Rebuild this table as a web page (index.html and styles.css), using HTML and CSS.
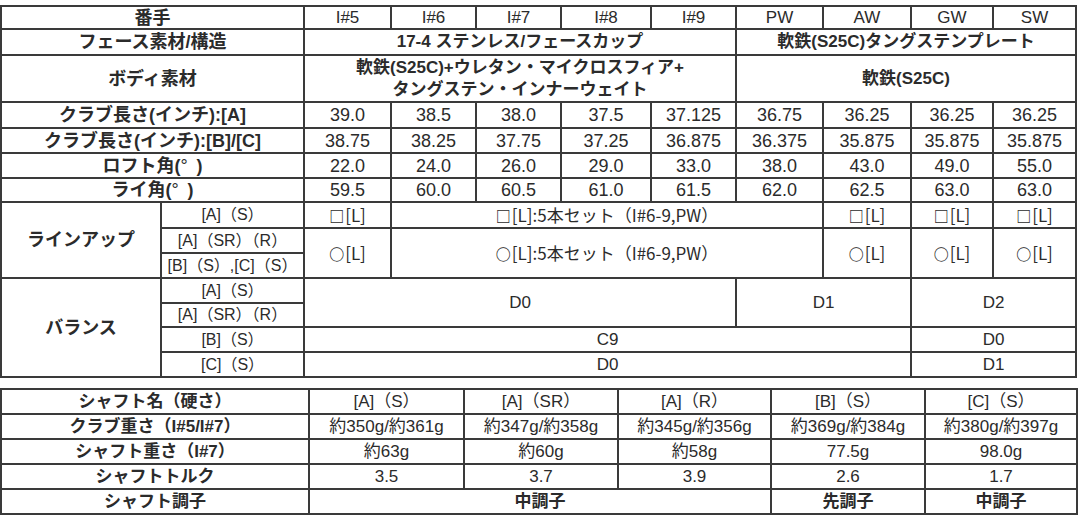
FILE: index.html
```html
<!DOCTYPE html>
<html lang="ja">
<head>
<meta charset="utf-8">
<title>スペック表</title>
<link rel="stylesheet" href="styles.css">
</head>
<body>
<div class="page">
<table class="spec">
  <colgroup>
    <col class="c-label"><col class="c-sub">
    <col class="c87"><col class="c85"><col class="c85"><col class="c90"><col class="c85">
    <col class="c87"><col class="c88"><col class="c82"><col class="c83">
  </colgroup>
  <tr class="r23">
    <th colspan="2">番手</th>
    <td>I#5</td><td>I#6</td><td>I#7</td><td>I#8</td><td>I#9</td><td>PW</td><td>AW</td><td>GW</td><td>SW</td>
  </tr>
  <tr class="r26">
    <th colspan="2">フェース素材/構造</th>
    <td colspan="5" class="b">17-4 ステンレス/フェースカップ</td>
    <td colspan="4" class="b">軟鉄(S25C)タングステンプレート</td>
  </tr>
  <tr class="r47">
    <th colspan="2">ボディ素材</th>
    <td colspan="5" class="b two">軟鉄(S25C)+ウレタン・マイクロスフィア+<br>タングステン・インナーウェイト</td>
    <td colspan="4" class="b">軟鉄(S25C)</td>
  </tr>
  <tr class="r26 num">
    <th colspan="2">クラブ長さ(インチ):[A]</th>
    <td>39.0</td><td>38.5</td><td>38.0</td><td>37.5</td><td>37.125</td><td>36.75</td><td>36.25</td><td>36.25</td><td>36.25</td>
  </tr>
  <tr class="r25 num">
    <th colspan="2">クラブ長さ(インチ):[B]/[C]</th>
    <td>38.75</td><td>38.25</td><td>37.75</td><td>37.25</td><td>36.875</td><td>36.375</td><td>35.875</td><td>35.875</td><td>35.875</td>
  </tr>
  <tr class="r25 num">
    <th colspan="2">ロフト角(<span class="deg">°</span>)</th>
    <td>22.0</td><td>24.0</td><td>26.0</td><td>29.0</td><td>33.0</td><td>38.0</td><td>43.0</td><td>49.0</td><td>55.0</td>
  </tr>
  <tr class="r24 num">
    <th colspan="2">ライ角(<span class="deg">°</span>)</th>
    <td>59.5</td><td>60.0</td><td>60.5</td><td>61.0</td><td>61.5</td><td>62.0</td><td>62.5</td><td>63.0</td><td>63.0</td>
  </tr>
  <tr class="r26 line">
    <th rowspan="3">ラインアップ</th>
    <td class="sub">[A]（S）</td>
    <td><span class="mk">□</span>[L]</td>
    <td colspan="5"><span class="mk">□</span>[L]:5本セット（I#6-9,PW）</td>
    <td><span class="mk">□</span>[L]</td><td><span class="mk">□</span>[L]</td><td><span class="mk">□</span>[L]</td>
  </tr>
  <tr class="r25 line">
    <td class="sub">[A]（SR）（R）</td>
    <td rowspan="2"><span class="mk">○</span>[L]</td>
    <td colspan="5" rowspan="2"><span class="mk">○</span>[L]:5本セット（I#6-9,PW）</td>
    <td rowspan="2"><span class="mk">○</span>[L]</td><td rowspan="2"><span class="mk">○</span>[L]</td><td rowspan="2"><span class="mk">○</span>[L]</td>
  </tr>
  <tr class="r25 line">
    <td class="sub">[B]（S）,[C]（S）</td>
  </tr>
  <tr class="r25">
    <th rowspan="4">バランス</th>
    <td class="sub">[A]（S）</td>
    <td colspan="5" rowspan="2">D0</td>
    <td colspan="2" rowspan="2">D1</td>
    <td colspan="2" rowspan="2">D2</td>
  </tr>
  <tr class="r24">
    <td class="sub">[A]（SR）（R）</td>
  </tr>
  <tr class="r25">
    <td class="sub">[B]（S）</td>
    <td colspan="7">C9</td>
    <td colspan="2">D0</td>
  </tr>
  <tr class="r25">
    <td class="sub">[C]（S）</td>
    <td colspan="7">D0</td>
    <td colspan="2">D1</td>
  </tr>
</table>

<table class="spec shaft">
  <colgroup>
    <col class="s-label"><col class="s155"><col class="s154"><col class="s153"><col class="s154"><col class="s152">
  </colgroup>
  <tr class="r25">
    <th>シャフト名（硬さ）</th>
    <td>[A]（S）</td><td>[A]（SR）</td><td>[A]（R）</td><td>[B]（S）</td><td>[C]（S）</td>
  </tr>
  <tr class="r25">
    <th>クラブ重さ（I#5/I#7）</th>
    <td>約350g/約361g</td><td>約347g/約358g</td><td>約345g/約356g</td><td>約369g/約384g</td><td>約380g/約397g</td>
  </tr>
  <tr class="r25">
    <th>シャフト重さ（I#7）</th>
    <td>約63g</td><td>約60g</td><td>約58g</td><td>77.5g</td><td>98.0g</td>
  </tr>
  <tr class="r25">
    <th>シャフトトルク</th>
    <td>3.5</td><td>3.7</td><td>3.9</td><td>2.6</td><td>1.7</td>
  </tr>
  <tr class="r25">
    <th>シャフト調子</th>
    <td colspan="3" class="b">中調子</td><td class="b">先調子</td><td class="b">中調子</td>
  </tr>
</table>
</div>
</body>
</html>
```

FILE: styles.css
```css
html, body {
  margin: 0;
  padding: 0;
  background: #ffffff;
}

.page {
  padding: 5px 0 0 0;
  width: 1080px;
}

.spec {
  border-collapse: collapse;
  table-layout: fixed;
  width: 1076px;
  font-family: "Liberation Sans", "Noto Sans CJK JP", sans-serif;
  font-size: 17px;
  color: #2b2b2b;
}

.spec th,
.spec td {
  border: 2px solid #3a3a3a;
  padding: 0;
  text-align: center;
  vertical-align: middle;
  line-height: 20px;
  white-space: nowrap;
  overflow: hidden;
}

.spec th {
  font-weight: 700;
  font-size: 18px;
}

.shaft th {
  font-size: 17px;
}

.spec td {
  font-weight: 400;
}

.spec td.b {
  font-weight: 700;
}

.spec td.two {
  line-height: 22px;
}

.num td {
  font-size: 18px;
}

.sub {
  font-size: 16px;
}

.line td {
  font-family: "Noto Sans CJK JP", "Liberation Sans", sans-serif;
}

.line td.sub {
  font-family: "Liberation Sans", "Noto Sans CJK JP", sans-serif;
}

.mk {
  font-family: "Noto Sans CJK JP", sans-serif;
  font-weight: 700;
  font-size: 15px;
  margin-right: 1px;
}

.deg {
  display: inline-block;
  width: 0.9em;
  text-align: left;
  font-weight: 400;
}

.r23 { height: 23px; }
.r24 { height: 24px; }
.r25 { height: 25px; }
.r26 { height: 26px; }
.r47 { height: 47px; }

.c-label { width: 160px; }
.c-sub { width: 143px; }
.c82 { width: 82px; }
.c83 { width: 83px; }
.c85 { width: 85px; }
.c87 { width: 87px; }
.c88 { width: 88px; }
.c90 { width: 90px; }

.shaft {
  margin-top: 10px;
}

.s-label { width: 308px; }
.s152 { width: 152px; }
.s153 { width: 153px; }
.s154 { width: 154px; }
.s155 { width: 155px; }
```
